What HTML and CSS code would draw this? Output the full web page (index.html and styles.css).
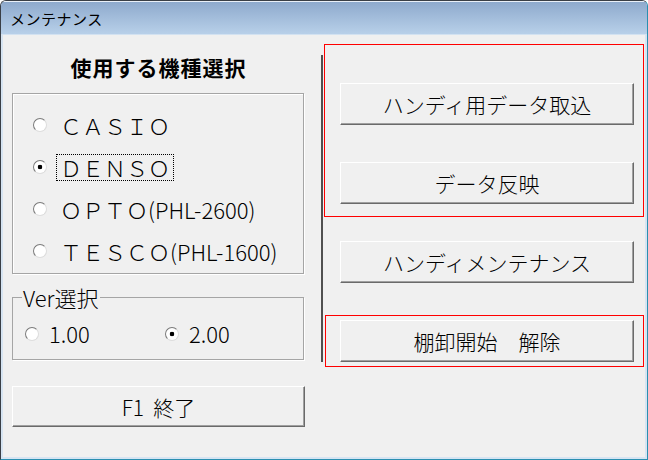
FILE: index.html
```html
<!DOCTYPE html>
<html lang="ja">
<head>
    <meta charset="UTF-8">
    <title>メンテナンス</title>
    <link rel="stylesheet" href="styles.css">
</head>
<body>

    <div class="window">
        <div class="titlebar">メンテナンス</div>
        <div class="client">
            <div class="left">
                <div class="heading">使用する機種選択</div>
                <div class="group">
                    <label class="opt"><input type="radio" name="model"><span class="cap">ＣＡＳＩＯ</span></label>
                    <label class="opt focus"><input type="radio" name="model" checked><span class="cap">ＤＥＮＳＯ</span></label>
                    <label class="opt"><input type="radio" name="model"><span class="cap">ＯＰＴＯ(PHL-2600)</span></label>
                    <label class="opt"><input type="radio" name="model"><span class="cap">ＴＥＳＣＯ(PHL-1600)</span></label>
                </div>
                <fieldset class="ver">
                    <legend>Ver選択</legend>
                    <div class="ver-row">
                        <label class="opt ver-first"><input type="radio" name="ver"><span class="cap">1.00</span></label>
                        <label class="opt"><input type="radio" name="ver" checked><span class="cap">2.00</span></label>
                    </div>
                </fieldset>
                <button class="btn end">F1&nbsp; 終了</button>
            </div>
            <div class="divider"></div>
            <div class="right">
                <div class="mark first">
                    <button class="btn">ハンディ用データ取込</button>
                    <button class="btn">データ反映</button>
                </div>
                <button class="btn solo">ハンディメンテナンス</button>
                <div class="mark second">
                    <button class="btn">棚卸開始　解除</button>
                </div>
            </div>
        </div>
    </div>

</body>
</html>
```

FILE: styles.css
```css
* {
    box-sizing: border-box;
}
body {
    margin: 0;
    background-color: #fff;
    font-family: "Noto Sans CJK JP", sans-serif;
    font-weight: 300;
    color: #000;
}
.window {
    width: 648px;
    height: 460px;
    border: 1px solid #3a3f46;
    border-right-color: #2a8fb0;
    border-bottom-color: #2a8fb0;
    border-radius: 6px 6px 0 0;
    background-color: #d6e4f2;
    display: flex;
    flex-direction: column;
    overflow: hidden;
}
.titlebar {
    height: 34px;
    border-top: 1px solid #e9f0f8;
    border-bottom: 1px solid #d3e2f1;
    background: linear-gradient(#8eaacd, #b8d0e9);
    font-size: 15px;
    font-weight: 400;
    letter-spacing: 0.5px;
    line-height: 28px;
    padding: 3px 0 0 9px;
}
.client {
    flex: 1;
    margin: 0 2px 2px;
    background-color: #f0f0f0;
    display: flex;
    padding-left: 9px;
}
.left {
    width: 293px;
    display: flex;
    flex-direction: column;
}
.heading {
    margin-top: 20px;
    height: 24px;
    line-height: 24px;
    text-align: center;
    font-size: 21px;
    font-weight: bold;
    letter-spacing: 1px;
}
.group {
    margin-top: 14px;
    width: 292px;
    height: 181px;
    border: 1px solid #a5a5a5;
    box-shadow: inset 1px 1px #fff, 1px 1px #fff;
    padding: 10px 0 0 20px;
}
.opt {
    display: flex;
    align-items: center;
    height: 42px;
    font-size: 22px;
}
.opt input {
    appearance: none;
    width: 14px;
    height: 14px;
    margin: 0 9px 0 0;
    border: 1px solid;
    border-color: #7a7a7a #dcdcdc #dcdcdc #7a7a7a;
    border-radius: 50%;
    background: #fff;
}
.opt input:checked {
    background: radial-gradient(circle, #000 0 2px, #fff 2.6px);
}
.cap {
    border: 1px dotted transparent;
    padding: 0 3px;
    line-height: 25px;
}
.focus .cap {
    border-color: #000;
}
.ver {
    margin: 14px 0 0;
    width: 292px;
    padding: 13px 0 12px 12px;
    border: 1px solid #a5a5a5;
    box-shadow: 1px 1px #fff;
}
.ver legend {
    font-size: 22px;
    line-height: 19px;
    padding: 0 1px;
    margin-left: -3px;
}
.ver-row {
    display: flex;
}
.ver .opt {
    height: 27px;
}
.ver .opt input {
    margin-right: 6px;
}
.ver-first {
    width: 140px;
}
.btn {
    font-family: inherit;
    font-size: 21px;
    font-weight: 300;
    color: #000;
    background-color: #f0f0f0;
    border: 1px solid;
    border-color: #fff #6a6a6a #6a6a6a #fff;
    box-shadow: inset -1px -1px #a0a0a0;
    padding: 0;
}
.end {
    margin-top: 26px;
    width: 293px;
    height: 41px;
}
.divider {
    width: 2px;
    height: 307px;
    margin: 20px 0 0 16px;
    background-color: #505050;
}
.right {
    margin-left: 1px;
    width: 320px;
    display: flex;
    flex-direction: column;
}
.right .btn {
    width: 294px;
    height: 42px;
}
.mark {
    border: 1px solid #f00;
}
.first {
    margin-top: 9px;
    height: 173px;
    padding: 38px 0 0 15px;
    display: flex;
    flex-direction: column;
    gap: 37px;
}
.right .solo {
    margin: 24px 0 0 16px;
}
.second {
    margin: 32px 0 0 1px;
    height: 52px;
    padding: 4px 0 0 14px;
}
```
